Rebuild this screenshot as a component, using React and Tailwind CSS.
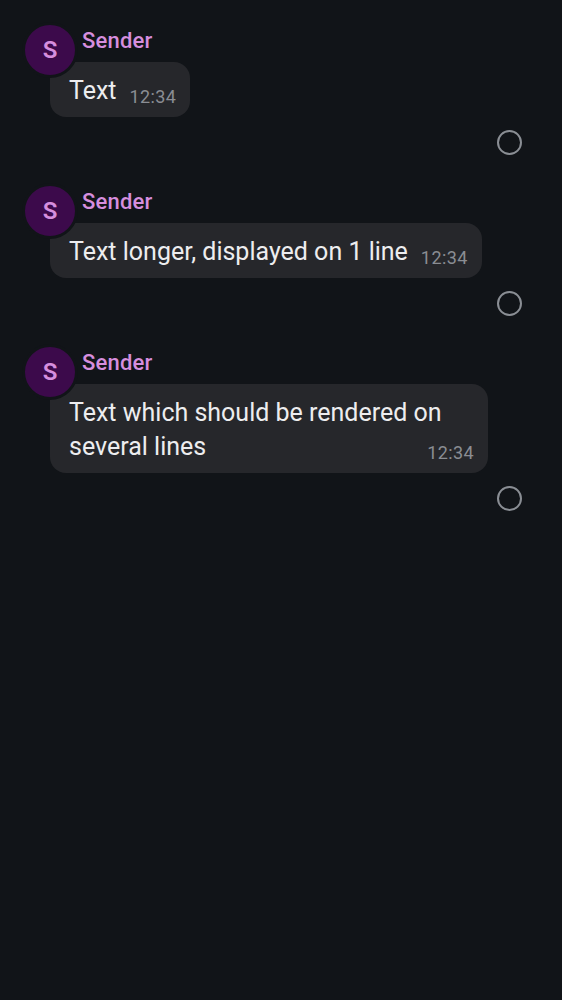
import React from 'react';

const messages = [
    { id: 1, sender: 'Sender', text: 'Text', time: '12:34' },
    { id: 2, sender: 'Sender', text: 'Text longer, displayed on 1 line', time: '12:34' },
    { id: 3, sender: 'Sender', text: 'Text which should be rendered on several lines', time: '12:34' },
];

function Message({ message }) {
    return (
        <div className="relative pl-[50px]">
            {/* Avatar */}
            <div className="absolute left-[22px] top-[-3px] z-10 w-[56px] h-[56px] rounded-full border-[3px] border-[#111418] bg-[#3c0a4b] flex items-center justify-center">
                <span className="text-[24px] font-semibold leading-none text-[#d68ede]">S</span>
            </div>

            {/* Sender */}
            <div className="h-[37px] pl-[32px] text-[22px] font-medium leading-[31px] tracking-[0.2px] text-[#d68ede]">
                {message.sender}
            </div>

            {/* Bubble */}
            <div className="w-fit max-w-[438px] rounded-[16px] bg-[#26272b] pl-[19px] pr-[14px] pt-[12px] pb-[9px]">
                <p className="text-[25px] leading-[34px] text-[#ededef]">
                    {message.text}
                    <span className="float-right ml-[13px] mt-[9px] text-[18px] leading-[27px] tracking-[0.4px] text-[#8a8d93]">
                        {message.time}
                    </span>
                </p>
            </div>

            {/* Select circle */}
            <div className="flex justify-end pr-[40px] pt-[13px] pb-[31px]">
                <div className="w-[25px] h-[25px] rounded-full border-2 border-[#8a8e94]"></div>
            </div>
        </div>
    );
}

export default function App() {
    return (
        <main className="min-h-screen bg-[#111418] pt-[25px] font-['Roboto',sans-serif]">
            {messages.map((m) => (
                <Message key={m.id} message={m} />
            ))}
        </main>
    );
}
